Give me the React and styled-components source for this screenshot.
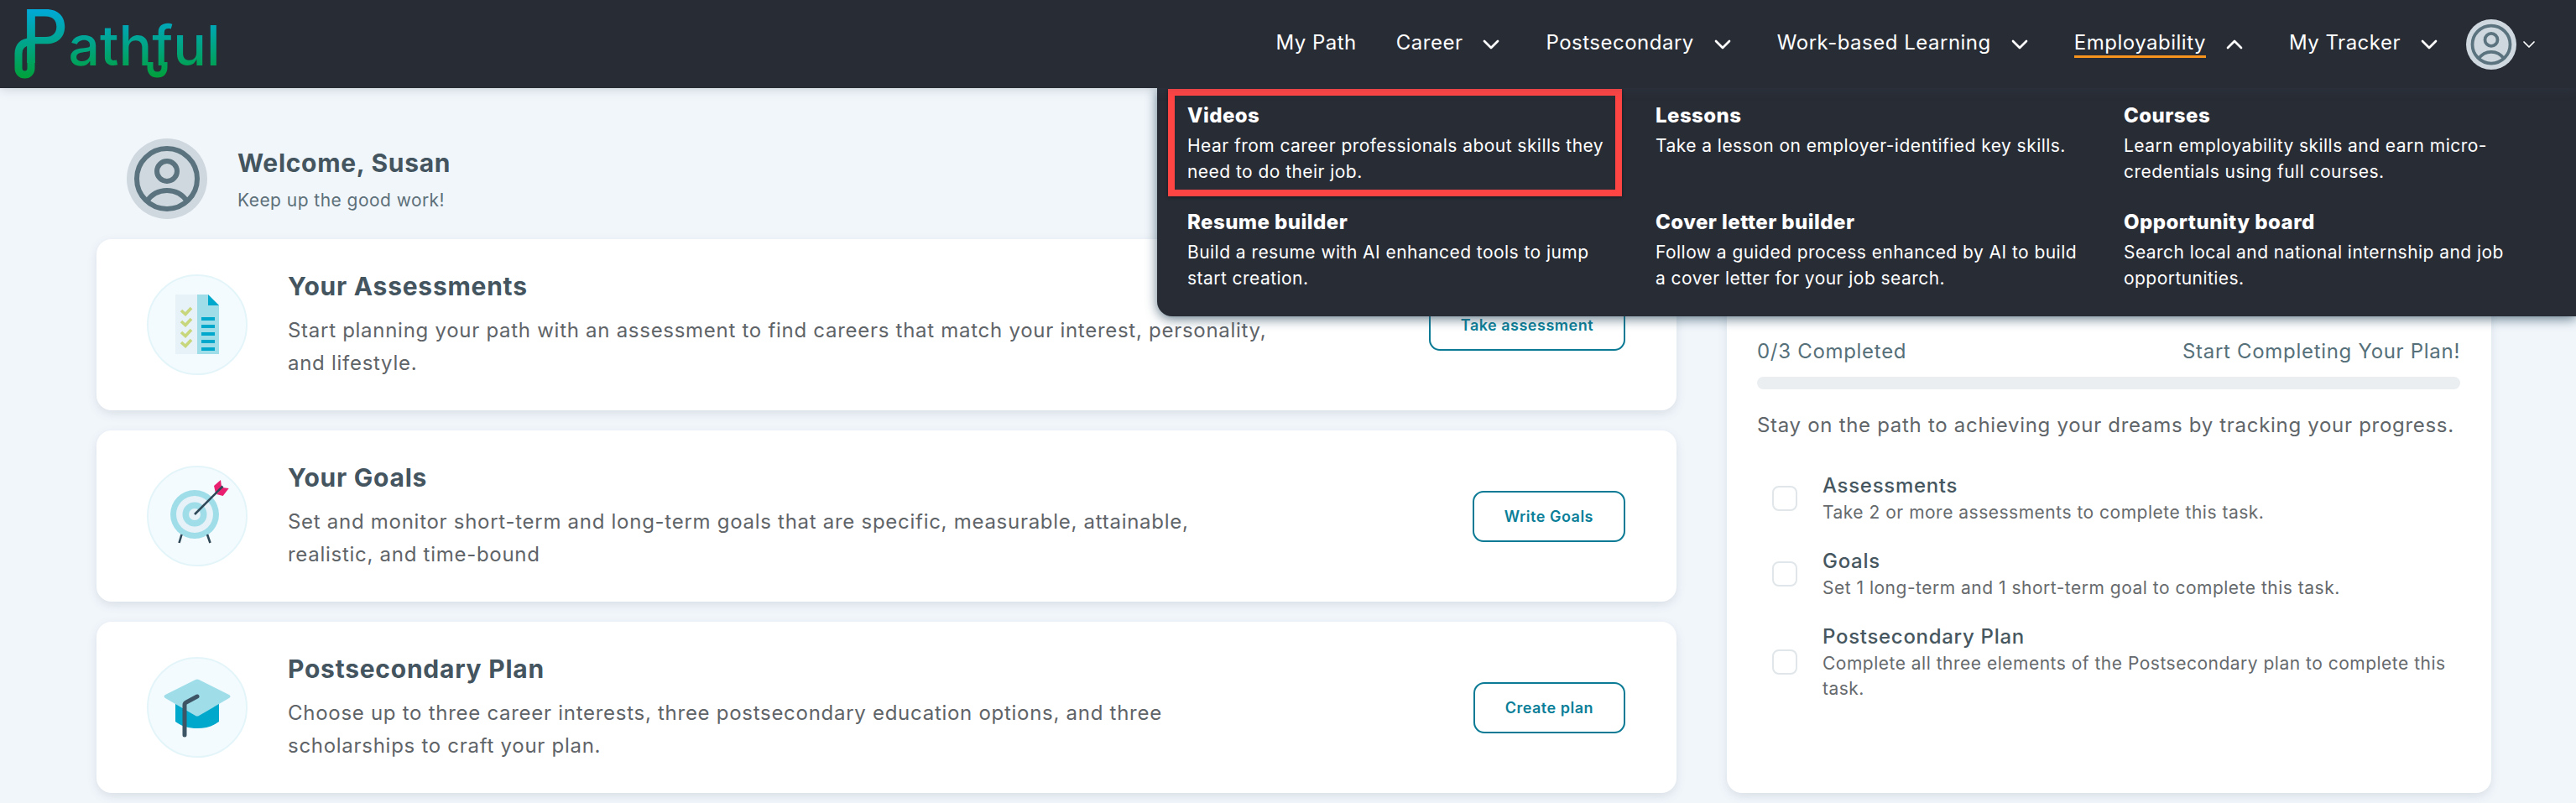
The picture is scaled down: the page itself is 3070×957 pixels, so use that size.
import React from "react";
import styled, { createGlobalStyle } from "styled-components";
import { ChevronDown, ChevronUp } from "lucide-react";

const GlobalStyle = createGlobalStyle`
  html, body { margin: 0; padding: 0; background: #f1f6fb; }
  body { font-family: Inter, "Noto Sans", sans-serif; overflow: hidden; }
  * { box-sizing: border-box; }
`;

const Page = styled.div`
  position: relative;
  width: 3070px;
  height: 957px;
  overflow: hidden;
`;

const Header = styled.header`
  position: relative;
  z-index: 3;
  height: 105px;
  background: #282c35;
  display: flex;
  align-items: center;
  justify-content: space-between;
  padding: 0 44px 0 0;
  box-shadow: 0 2px 12px rgba(60, 80, 95, 0.2);
`;

const Logo = styled.div`
  position: relative;
  width: 275px;
  height: 105px;
`;

const LogoText = styled.div`
  height: 105px;
  padding: 3px 0 0 25px;
  line-height: 80px;
  font-size: 66px;
  font-weight: 500;
  white-space: nowrap;
  color: transparent;
  background: linear-gradient(180deg, #00a9dc 9%, #00a03a 88%);
  -webkit-background-clip: text;
  background-clip: text;
`;

const LogoP = styled.span`
  font-size: 88px;
  font-weight: 500;
  vertical-align: 3px;
`;

const LogoLines = styled.svg`
  position: absolute;
  left: 0;
  top: 0;
`;

const Nav = styled.nav`
  display: flex;
  align-items: center;
  gap: 49px;
`;

const NavItem = styled.div`
  display: flex;
  align-items: center;
  gap: 18px;
  margin-right: ${(p) => (p.$plain ? "-2px" : "0")};
  color: #fff;
  font-size: 24px;
  letter-spacing: 0.5px;
  white-space: nowrap;
  svg { flex: none; }
`;

const NavLabel = styled.span`
  line-height: 30px;
  border-bottom: 3px solid ${(p) => (p.$active ? "#f7941d" : "transparent")};
`;

const UserMenu = styled.div`
  display: flex;
  align-items: center;
  gap: 3px;
  margin-left: -21px;
  color: #fff;
`;

const MegaMenu = styled.div`
  position: absolute;
  z-index: 2;
  top: 105px;
  left: 1379px;
  right: 0;
  height: 272px;
  padding: 16px 0 0 36px;
  background: #282c35;
  border-bottom-left-radius: 18px;
  box-shadow: 0 3px 14px rgba(50, 80, 100, 0.75);
  display: grid;
  grid-template-columns: repeat(3, 558px);
  grid-auto-rows: 127px;
  color: #fff;
`;

const MenuEntry = styled.div`
  padding-top: 1px;
  width: 512px;
`;

const MenuTitle = styled.div`
  font-size: 24px;
  font-weight: 800;
  line-height: 32px;
  letter-spacing: 0.45px;
`;

const MenuText = styled.div`
  margin-top: 4px;
  font-size: 21px;
  line-height: 31px;
  letter-spacing: 0.45px;
`;

const Highlight = styled.div`
  position: absolute;
  left: 13px;
  top: 1px;
  width: 541px;
  height: 128px;
  border: 8px solid #ff4444;
  box-shadow: 0 1px 4px rgba(0, 0, 0, 0.4);
`;

const Main = styled.main`
  padding: 60px 101px 0 115px;
`;

const Welcome = styled.section`
  display: flex;
  align-items: center;
  gap: 36px;
  height: 96px;
  padding-left: 36px;
  margin-bottom: 24px;
`;

const WelcomeTitle = styled.div`
  font-size: 30px;
  font-weight: 700;
  line-height: 44px;
  color: #44555f;
  letter-spacing: 0.7px;
`;

const WelcomeSub = styled.div`
  font-size: 21px;
  line-height: 32px;
  margin-top: 7px;
  color: #5d7079;
  letter-spacing: 0.45px;
`;

const Columns = styled.div`
  display: grid;
  grid-template-columns: 1883px 911px;
  column-gap: 60px;
`;

const CardStack = styled.div`
  display: flex;
  flex-direction: column;
  gap: 24px;
`;

const Card = styled.article`
  height: 204px;
  background: #fff;
  border-radius: 18px;
  box-shadow: 0 4px 12px rgba(70, 90, 105, 0.14);
  display: flex;
  align-items: center;
  padding: 0 61px 0 60px;
`;

const IconCircle = styled.div`
  flex: none;
  width: 120px;
  height: 120px;
  border-radius: 50%;
  background: #f4fbfe;
  border: 2px solid #e4f5fa;
  display: flex;
  align-items: center;
  justify-content: center;
  margin-right: 48px;
`;

const CardBody = styled.div`
  flex: 1;
`;

const CardTitle = styled.h2`
  margin: 0 0 14px;
  font-size: 30px;
  font-weight: 700;
  line-height: 38px;
  color: #44555f;
  letter-spacing: 0.75px;
`;

const CardText = styled.p`
  margin: 0;
  max-width: 1175px;
  font-size: 24px;
  line-height: 39px;
  color: #5f6468;
  letter-spacing: 0.72px;
`;

const ActionButton = styled.button`
  flex: none;
  height: 61px;
  padding: 0 36px;
  background: #fff;
  border: 2px solid #0b7a94;
  border-radius: 13px;
  color: #0b7f99;
  font-family: inherit;
  font-size: 18px;
  font-weight: 600;
  letter-spacing: 0.5px;
  white-space: nowrap;
`;

const TrackerCard = styled.aside`
  height: 660px;
  background: #fff;
  border-radius: 18px;
  box-shadow: 0 4px 12px rgba(70, 90, 105, 0.14);
  padding: 115px 37px 0 36px;
`;

const ProgressRow = styled.div`
  display: flex;
  justify-content: space-between;
  font-size: 24px;
  line-height: 38px;
  letter-spacing: 0.7px;
  color: #56707a;
`;

const ProgressTrack = styled.div`
  height: 15px;
  margin-top: 11px;
  border-radius: 8px;
  background: #eaeef1;
`;

const TrackerIntro = styled.p`
  margin: 24px 0 36px;
  font-size: 24px;
  line-height: 38px;
  letter-spacing: 0.7px;
  color: #606569;
  white-space: nowrap;
`;

const Task = styled.div`
  display: flex;
  align-items: center;
  gap: 30px;
  padding-left: 18px;
  margin-bottom: 26px;
`;

const TaskBox = styled.span`
  flex: none;
  width: 30px;
  height: 30px;
  border: 2px solid #e0e6e9;
  border-radius: 8px;
`;

const TaskTitle = styled.div`
  font-size: 24px;
  font-weight: 500;
  line-height: 34px;
  letter-spacing: 0.7px;
  color: #46575f;
`;

const TaskText = styled.div`
  font-size: 21px;
  line-height: 30px;
  letter-spacing: 0.5px;
  color: #666a6d;
`;

function ProfileAvatar({ size }) {
  return (
    <svg width={size} height={size} viewBox="0 0 96 96" fill="none">
      <circle cx="48" cy="48" r="48" fill="#cfd8de" />
      <circle cx="48" cy="48" r="36" stroke="#5a737e" strokeWidth="6" />
      <circle cx="48" cy="39" r="12" stroke="#5a737e" strokeWidth="6" />
      <path d="M24 75C30 66 38 62 48 62C58 62 66 66 72 75" stroke="#5a737e" strokeWidth="6" />
    </svg>
  );
}

function AssessmentIcon() {
  return (
    <svg width="116" height="116" viewBox="2 2 116 116">
      <rect x="34" y="24" width="26" height="71" fill="#e6f1f8" />
      <path d="M60 24H73L86 37V95H60Z" fill="#9fdde9" />
      <path d="M73 24L86 37H73Z" fill="#00a8cc" />
      {[51, 60, 69, 78, 87].map((y) => (
        <rect key={y} x="65" y={y} width="16" height="4" fill="#00a8cc" />
      ))}
      {[43, 56, 69, 81].map((y) => (
        <path key={y} d={`M41 ${y}L46 ${y + 4.5}L53 ${y - 3}`} fill="none" stroke="#c8d67c" strokeWidth="3.6" />
      ))}
    </svg>
  );
}

function GoalIcon() {
  return (
    <svg width="116" height="116" viewBox="2 2 116 116">
      <circle cx="57" cy="58" r="29" fill="#9fdde9" />
      <circle cx="57" cy="58" r="22" fill="#e6f1f8" />
      <circle cx="57" cy="58" r="14.5" fill="#9fdde9" />
      <circle cx="57" cy="58" r="7" fill="#e6f1f8" />
      <path d="M41.5 82L38.5 92M72 82L75.5 92" stroke="#2f4858" strokeWidth="2.6" />
      <path d="M80 24L88 17L89 25L82 33Z" fill="#e8206f" />
      <path d="M83 34L90.7 36L97.7 27L90 26Z" fill="#e8206f" />
      <path d="M57 58L90.5 24.5" stroke="#2f4858" strokeWidth="2.6" />
    </svg>
  );
}

function PlanIcon() {
  return (
    <svg width="116" height="116" viewBox="2 2 116 116">
      <path d="M34 55H86V77C78 83 70 85 60 85C50 85 42 83 34 77Z" fill="#00a8cc" />
      <path d="M58 27Q60 26 62 27L98 45Q101 47 98 49L62 70Q60 71 58 70L22 49Q19 47 22 45Z" fill="#9fdde9" />
      <path d="M60 47L47 54Q45 55 45 57V93" fill="none" stroke="#3d5564" strokeWidth="5" strokeLinecap="round" />
    </svg>
  );
}

const navItems = [
  { label: "My Path" },
  { label: "Career", menu: true },
  { label: "Postsecondary", menu: true },
  { label: "Work-based Learning", menu: true },
  { label: "Employability", menu: true, active: true },
  { label: "My Tracker", menu: true },
];

const menuEntries = [
  { title: "Videos", text: "Hear from career professionals about skills they need to do their job." },
  { title: "Lessons", text: "Take a lesson on employer-identified key skills." },
  { title: "Courses", text: "Learn employability skills and earn micro-credentials using full courses." },
  { title: "Resume builder", text: "Build a resume with AI enhanced tools to jump start creation." },
  { title: "Cover letter builder", text: "Follow a guided process enhanced by AI to build a cover letter for your job search." },
  { title: "Opportunity board", text: "Search local and national internship and job opportunities." },
];

const cards = [
  {
    icon: <AssessmentIcon />,
    title: "Your Assessments",
    text: "Start planning your path with an assessment to find careers that match your interest, personality, and lifestyle.",
    action: "Take assessment",
  },
  {
    icon: <GoalIcon />,
    title: "Your Goals",
    text: "Set and monitor short-term and long-term goals that are specific, measurable, attainable, realistic, and time-bound",
    action: "Write Goals",
  },
  {
    icon: <PlanIcon />,
    title: "Postsecondary Plan",
    text: "Choose up to three career interests, three postsecondary education options, and three scholarships to craft your plan.",
    action: "Create plan",
  },
];

const tasks = [
  { title: "Assessments", text: "Take 2 or more assessments to complete this task." },
  { title: "Goals", text: "Set 1 long-term and 1 short-term goal to complete this task." },
  { title: "Postsecondary Plan", text: "Complete all three elements of the Postsecondary plan to complete this task." },
];

export default function App() {
  return (
    <Page>
      <GlobalStyle />
      <Header>
        <Logo>
          <LogoText>
            <LogoP>P</LogoP>athful
          </LogoText>
          <LogoLines width="275" height="105" viewBox="0 0 275 105" fill="none">
            <defs>
              <linearGradient id="logoFade" gradientUnits="userSpaceOnUse" x1="0" y1="9" x2="0" y2="93">
                <stop offset="0" stopColor="#00a9dc" />
                <stop offset="1" stopColor="#00a03a" />
              </linearGradient>
            </defs>
            {/* loop under the P and the dip joining h to f */}
            <path
              d="M37 72V81C37 86 34 89 29.5 89C25 89 22 86 22 81V64C22 55 27 50 36 50"
              stroke="url(#logoFade)"
              strokeWidth="9"
            />
            <path d="M179 74V80C179 86 182 89 187.5 89C193 89 196 86 196 80V74" stroke="url(#logoFade)" strokeWidth="7" />
          </LogoLines>
        </Logo>
        <Nav>
          {navItems.map((item) => (
            <NavItem key={item.label} $plain={!item.menu}>
              <NavLabel $active={item.active}>{item.label}</NavLabel>
              {item.menu && (item.active ? <ChevronUp size={32} /> : <ChevronDown size={32} />)}
            </NavItem>
          ))}
          <UserMenu>
            <ProfileAvatar size={60} />
            <ChevronDown size={24} strokeWidth={1.7} />
          </UserMenu>
        </Nav>
      </Header>

      <MegaMenu>
        {menuEntries.map((entry) => (
          <MenuEntry key={entry.title}>
            <MenuTitle>{entry.title}</MenuTitle>
            <MenuText>{entry.text}</MenuText>
          </MenuEntry>
        ))}
        <Highlight />
      </MegaMenu>

      <Main>
        <Welcome>
          <ProfileAvatar size={96} />
          <div>
            <WelcomeTitle>Welcome, Susan</WelcomeTitle>
            <WelcomeSub>Keep up the good work!</WelcomeSub>
          </div>
        </Welcome>
        <Columns>
          <CardStack>
            {cards.map((card) => (
              <Card key={card.title}>
                <IconCircle>{card.icon}</IconCircle>
                <CardBody>
                  <CardTitle>{card.title}</CardTitle>
                  <CardText>{card.text}</CardText>
                </CardBody>
                <ActionButton>{card.action}</ActionButton>
              </Card>
            ))}
          </CardStack>
          <TrackerCard>
            <ProgressRow>
              <span>0/3 Completed</span>
              <span>Start Completing Your Plan!</span>
            </ProgressRow>
            <ProgressTrack />
            <TrackerIntro>Stay on the path to achieving your dreams by tracking your progress.</TrackerIntro>
            {tasks.map((task) => (
              <Task key={task.title}>
                <TaskBox />
                <div>
                  <TaskTitle>{task.title}</TaskTitle>
                  <TaskText>{task.text}</TaskText>
                </div>
              </Task>
            ))}
          </TrackerCard>
        </Columns>
      </Main>
    </Page>
  );
}
